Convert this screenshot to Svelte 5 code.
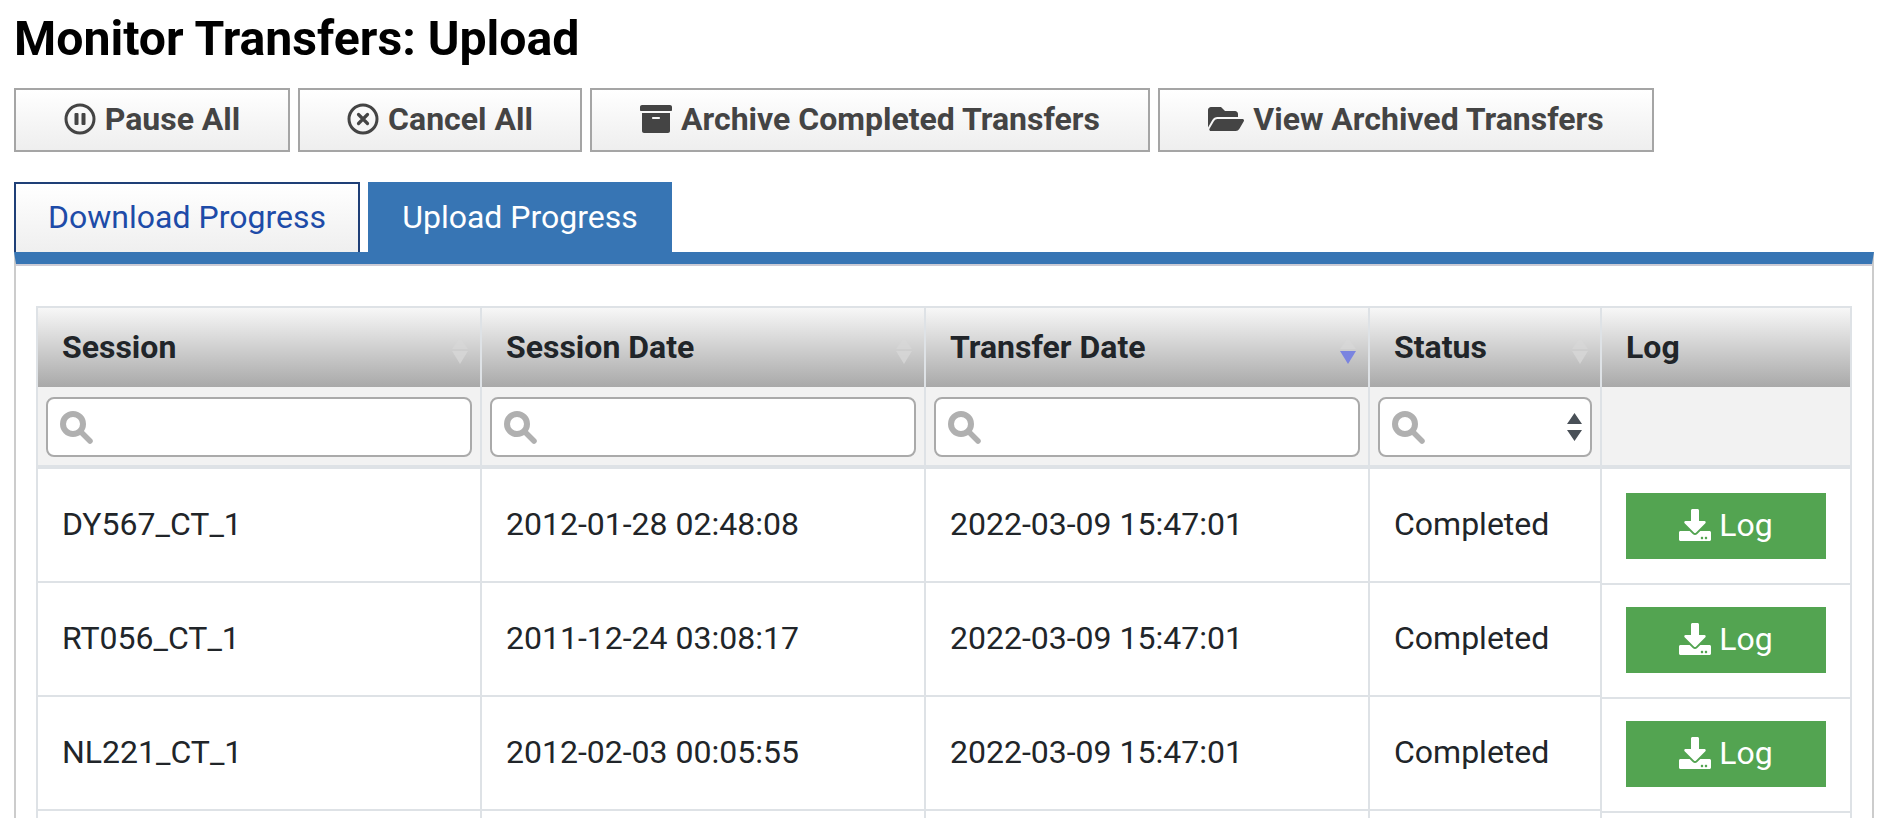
<script>
	let columns = [
		{ label: 'Session', sort: 'none' },
		{ label: 'Session Date', sort: 'none' },
		{ label: 'Transfer Date', sort: 'desc' },
		{ label: 'Status', sort: 'none' }
	]

	let rows = [
		['DY567_CT_1', '2012-01-28 02:48:08', '2022-03-09 15:47:01', 'Completed'],
		['RT056_CT_1', '2011-12-24 03:08:17', '2022-03-09 15:47:01', 'Completed'],
		['NL221_CT_1', '2012-02-03 00:05:55', '2022-03-09 15:47:01', 'Completed']
	]
</script>

{#snippet searchIcon()}
	<svg class="search" viewBox="0 0 33 33" aria-hidden="true">
		<circle cx="13" cy="13" r="10" fill="none" stroke="#b0b0b0" stroke-width="6" />
		<path d="M21 21l9 9" fill="none" stroke="#b0b0b0" stroke-width="5.5" stroke-linecap="round" />
	</svg>
{/snippet}

<div class="page">
	<h1>Monitor Transfers: Upload</h1>

	<div class="actions">
		<button class="action">
			<svg class="ico" viewBox="0 0 32 32" aria-hidden="true">
				<circle cx="16" cy="16" r="14" fill="none" stroke="#444" stroke-width="3" />
				<rect x="10.5" y="10" width="4" height="12" rx="1" fill="#444" />
				<rect x="17.5" y="10" width="4" height="12" rx="1" fill="#444" />
			</svg>
			Pause All
		</button>
		<button class="action">
			<svg class="ico" viewBox="0 0 32 32" aria-hidden="true">
				<circle cx="16" cy="16" r="14" fill="none" stroke="#444" stroke-width="3" />
				<path d="M11.5 11.5l9 9M20.5 11.5l-9 9" fill="none" stroke="#444" stroke-width="3.2" stroke-linecap="round" />
			</svg>
			Cancel All
		</button>
		<button class="action">
			<svg class="ico" viewBox="0 0 512 512" aria-hidden="true">
				<path fill="#444" d="M32 448c0 17.7 14.3 32 32 32h384c17.7 0 32-14.3 32-32V160H32v288zm160-212c0-6.6 5.4-12 12-12h104c6.6 0 12 5.4 12 12v8c0 6.6-5.4 12-12 12H204c-6.6 0-12-5.4-12-12v-8zM480 32H32C14.3 32 0 46.3 0 64v48c0 8.8 7.2 16 16 16h480c8.8 0 16-7.2 16-16V64c0-17.7-14.3-32-32-32z" />
			</svg>
			Archive Completed Transfers
		</button>
		<button class="action">
			<svg class="ico wide" viewBox="0 0 576 512" aria-hidden="true">
				<path fill="#444" d="M572.694 292.093L500.27 416.248A63.997 63.997 0 0 1 444.989 448H45.025c-18.523 0-30.064-20.093-20.731-36.093l72.424-124.155A64 64 0 0 1 152 256h399.964c18.523 0 30.064 20.093 20.73 36.093zM152 224h328v-48c0-26.51-21.49-48-48-48H272l-64-64H48C21.49 64 0 85.49 0 112v278.046l69.077-118.418C86.214 242.25 117.989 224 152 224z" />
			</svg>
			View Archived Transfers
		</button>
	</div>

	<div class="tabs">
		<div class="tab">Download Progress</div>
		<div class="tab active">Upload Progress</div>
	</div>

	<div class="panel">
		<div class="table">
			{#each columns as col}
				<div class="th">
					<span>{col.label}</span>
					<svg class="sort" viewBox="0 0 16 26" aria-hidden="true">
						<path d="M8 0l8 11H0z" fill="#d8d8d8" opacity="0.6" />
						<path d="M0 13h16l-8 13z" fill={col.sort === 'desc' ? '#7a84e0' : '#d8d8d8'} opacity={col.sort === 'desc' ? 1 : 0.75} />
					</svg>
				</div>
			{/each}
			<div class="th">
				<span>Log</span>
			</div>

			{#each columns as col}
				<div class="filter-cell">
					<div class="filter">
						{@render searchIcon()}
						{#if col.label === 'Status'}
							<select aria-label={col.label}></select>
							<svg class="updown" viewBox="0 0 15 28" aria-hidden="true">
								<path d="M7.5 0l7.5 11H0zM0 17h15l-7.5 11z" fill="#495057" />
							</svg>
						{:else}
							<input type="text" aria-label={col.label} />
						{/if}
					</div>
				</div>
			{/each}
			<div class="filter-cell"></div>

			{#each rows as row}
				{#each row as value}
					<div class="td">{value}</div>
				{/each}
				<div class="td-log">
					<button class="log">
						<svg viewBox="0 0 512 512" aria-hidden="true">
							<path fill="#fff" d="M216 0h80c13.3 0 24 10.7 24 24v168h87.7c17.8 0 26.7 21.5 14.1 34.1L269.7 378.3c-7.5 7.5-19.8 7.5-27.3 0L90.1 226.1c-12.6-12.6-3.7-34.1 14.1-34.1H192V24c0-13.3 10.7-24 24-24zm296 376v112c0 13.3-10.7 24-24 24H24c-13.3 0-24-10.7-24-24V376c0-13.3 10.7-24 24-24h146.7l49 49c20.1 20.1 52.5 20.1 72.6 0l49-49H488c13.3 0 24 10.7 24 24zm-124 88c0-11-9-20-20-20s-20 9-20 20 9 20 20 20 20-9 20-20zm64 0c0-11-9-20-20-20s-20 9-20 20 9 20 20 20 20-9 20-20z" />
						</svg>
						Log
					</button>
				</div>
			{/each}

			<div class="td"></div>
			<div class="td"></div>
			<div class="td"></div>
			<div class="td"></div>
			<div class="td-log"></div>
		</div>
	</div>
</div>

<style>
	:global(body) {
		margin: 0;
		height: 100vh;
		overflow: hidden;
		background: #fff;
	}

	.page {
		height: 818px;
		overflow: hidden;
		box-sizing: border-box;
		padding: 14px 8px 0 14px;
		font-family: Roboto, "Liberation Sans", sans-serif;
		color: #212529;
	}

	h1 {
		margin: 0;
		height: 74px;
		font-size: 48.2px;
		line-height: 50px;
		font-weight: 700;
		color: #000;
	}

	.actions {
		display: flex;
		gap: 8px;
	}

	.action {
		display: flex;
		align-items: center;
		justify-content: center;
		gap: 9px;
		height: 64px;
		padding: 0 0 3px;
		border: 2px solid #a5a5a5;
		background: linear-gradient(#fff, #eee);
		font: 700 32px Roboto, sans-serif;
		color: #444;
	}

	.action:nth-child(1) { width: 276px; }
	.action:nth-child(2) { width: 284px; }
	.action:nth-child(3) { width: 560px; }
	.action:nth-child(4) { width: 496px; }

	.ico {
		width: 32px;
		height: 32px;
	}

	.ico.wide {
		width: 36px;
	}

	.tabs {
		display: flex;
		gap: 8px;
		margin-top: 30px;
	}

	.tab {
		box-sizing: border-box;
		display: flex;
		align-items: center;
		justify-content: center;
		width: 346px;
		height: 70px;
		padding-bottom: 2px;
		border: 2px solid #1f3f77;
		border-bottom: 0;
		background: linear-gradient(#fff, #efefef);
		font-size: 32px;
		color: #1d4ba8;
	}

	.tab.active {
		width: 304px;
		border-color: #3775b4;
		background: #3775b4;
		color: #fff;
	}

	.panel {
		border-top: 12px solid #3775b4;
		padding: 42px 20px 0;
		border-left: 2px solid #ccc;
		border-right: 2px solid #ccc;
		box-shadow: inset 0 2px 0 #cccbd5;
	}

	.table {
		display: grid;
		grid-template-columns: 444px 444px 444px 232px 250px;
		width: 1814px;
		border-left: 2px solid #dee2e6;
		border-top: 2px solid #dee2e6;
		font-size: 32px;
	}

	.th {
		display: flex;
		align-items: center;
		justify-content: space-between;
		height: 79px;
		padding: 0 12px 2px 24px;
		box-sizing: border-box;
		border-right: 2px solid #dee2e6;
		background: linear-gradient(#f7f7f7, #a9a9a9);
		font-weight: 700;
	}

	.sort {
		width: 16px;
		height: 26px;
		margin-top: 8px;
	}

	.filter-cell {
		box-sizing: border-box;
		height: 82px;
		padding: 10px 8px 0;
		border-right: 2px solid #dee2e6;
		border-bottom: 4px solid #dee2e6;
		background: #f2f2f2;
	}

	.filter {
		box-sizing: border-box;
		display: flex;
		align-items: center;
		gap: 8px;
		height: 60px;
		padding: 0 12px;
		border: 2px solid #aaa;
		border-radius: 8px;
		background: #fff;
	}

	.search {
		flex: none;
		width: 33px;
		height: 33px;
	}

	.updown {
		flex: none;
		width: 15px;
		height: 28px;
		margin-right: -4px;
	}

	input,
	select {
		flex: 1;
		min-width: 0;
		height: 100%;
		padding: 0;
		border: 0;
		outline: none;
		background: transparent;
		appearance: none;
		font: inherit;
	}

	.td {
		box-sizing: border-box;
		display: flex;
		align-items: center;
		height: 114px;
		padding: 0 24px 2px;
		border-right: 2px solid #dee2e6;
		border-bottom: 2px solid #dee2e6;
	}

	/* log column sits 2px lower than the rest of the row */
	.td-log {
		box-sizing: border-box;
		height: 116px;
		margin-bottom: -2px;
		padding: 24px 24px 0;
		border-right: 2px solid #dee2e6;
		border-bottom: 2px solid #dee2e6;
	}

	.log {
		display: flex;
		align-items: center;
		justify-content: center;
		gap: 8px;
		width: 200px;
		height: 66px;
		padding: 0 0 2px;
		border: 0;
		background: #53a451;
		font: 32px Roboto, sans-serif;
		color: #fff;
	}

	.log svg {
		width: 32px;
		height: 32px;
	}
</style>
